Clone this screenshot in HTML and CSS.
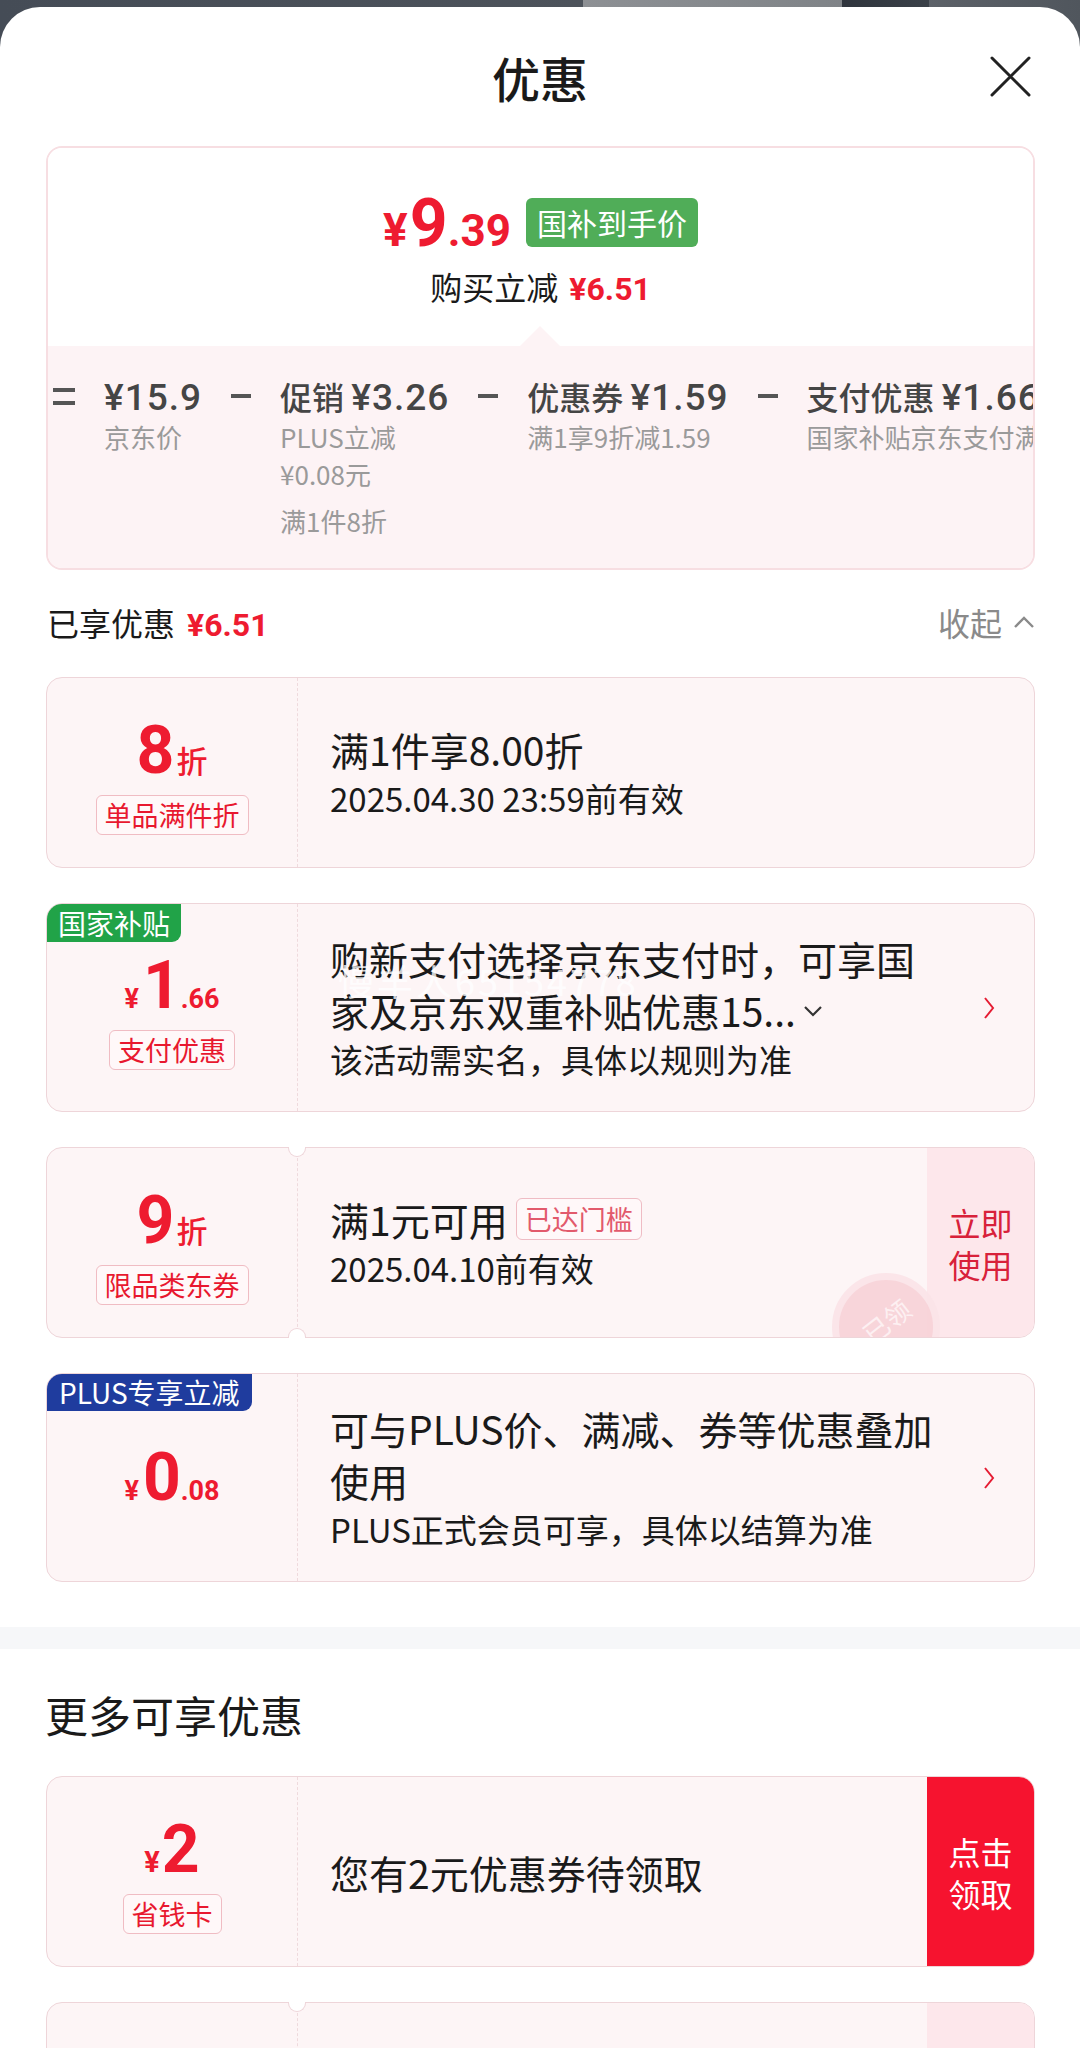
FILE: index.html
```html
<!DOCTYPE html>
<html lang="zh-CN">
<head>
<meta charset="utf-8">
<title>优惠</title>
<link rel="stylesheet" href="styles.css">
</head>
<body>
<div class="sheet">
  <header class="hd">
    <h1 class="hd-title">优惠</h1>
    <span class="hd-close">
      <svg width="43" height="43" viewBox="0 0 43 43"><path d="M3 3L40 40M40 3L3 40" stroke="#222" stroke-width="3" fill="none" stroke-linecap="round"/></svg>
    </span>
  </header>

  <section class="sum">
    <div class="sum-top">
      <div class="sum-price">
        <span class="pp"><span class="pp-y">¥</span><span class="pp-i">9</span><span class="pp-d">.39</span></span>
        <span class="gtag">国补到手价</span>
      </div>
      <div class="sum-save">购买立减 <span class="red-b">¥6.51</span></div>
    </div>
    <div class="sum-bot">
      <div class="calc">
        <span class="op"><span class="op-eq"></span></span>
        <div class="ci">
          <div class="ci-main"><span class="num">¥15.9</span></div>
          <div class="ci-sub">京东价</div>
        </div>
        <span class="op"><span class="op-min"></span></span>
        <div class="ci">
          <div class="ci-main">促销 <span class="num">¥3.26</span></div>
          <div class="ci-sub">PLUS立减</div>
          <div class="ci-sub">¥0.08元</div>
          <div class="ci-sub gap">满1件8折</div>
        </div>
        <span class="op"><span class="op-min"></span></span>
        <div class="ci">
          <div class="ci-main">优惠券 <span class="num">¥1.59</span></div>
          <div class="ci-sub">满1享9折减1.59</div>
        </div>
        <span class="op"><span class="op-min"></span></span>
        <div class="ci">
          <div class="ci-main">支付优惠 <span class="num">¥1.66</span></div>
          <div class="ci-sub">国家补贴京东支付满减</div>
        </div>
      </div>
    </div>
  </section>

  <div class="got">
    <div class="got-l">已享优惠<span class="got-v">¥6.51</span></div>
    <div class="got-r">收起
      <svg width="24" height="14" viewBox="0 0 24 14"><path d="M3 12L12 3L21 12" stroke="#8a8a8a" stroke-width="2.4" fill="none"/></svg>
    </div>
  </div>

  <div class="cp cp-first">
    <div class="cp-l">
      <div class="cp-num"><span class="n-big">8</span><span class="n-unit">折</span></div>
      <span class="cp-tag">单品满件折</span>
    </div>
    <div class="cp-m">
      <div class="cp-t">满1件享8.00折</div>
      <div class="cp-s">2025.04.30 23:59前有效</div>
    </div>
  </div>

  <div class="cp">
    <span class="badge badge-green">国家补贴</span>
    <div class="cp-l">
      <div class="cp-num"><span class="n-yen">¥</span><span class="n-big">1</span><span class="n-dec">.66</span></div>
      <span class="cp-tag">支付优惠</span>
    </div>
    <div class="cp-m">
      <div class="cp-t">购新支付选择京东支付时，可享国</div>
      <div class="cp-t">家及京东双重补贴优惠15...<svg class="chev-d" width="22" height="14" viewBox="0 0 22 14"><path d="M3 3L11 11L19 3" stroke="#333" stroke-width="2.2" fill="none"/></svg></div>
      <div class="cp-s">该活动需实名，具体以规则为准</div>
      <span class="wm">慢羊人65154778</span>
    </div>
    <div class="cp-arr"><svg width="12" height="24" viewBox="0 0 12 24"><path d="M2 2L10 12L2 22" stroke="#e51d34" stroke-width="2" fill="none"/></svg></div>
  </div>

  <div class="cp ticket">
    <div class="cp-l">
      <div class="cp-num"><span class="n-big">9</span><span class="n-unit">折</span></div>
      <span class="cp-tag">限品类东券</span>
    </div>
    <div class="cp-m">
      <div class="cp-t">满1元可用<span class="mtag">已达门槛</span></div>
      <div class="cp-s">2025.04.10前有效</div>
    </div>
    <div class="cp-act soft">立即<br>使用</div>
    <div class="stamp-clip"><div class="stamp"><span>已领</span></div></div>
  </div>

  <div class="cp">
    <span class="badge badge-blue">PLUS专享立减</span>
    <div class="cp-l">
      <div class="cp-num"><span class="n-yen">¥</span><span class="n-big">0</span><span class="n-dec">.08</span></div>
    </div>
    <div class="cp-m">
      <div class="cp-t">可与PLUS价、满减、券等优惠叠加</div>
      <div class="cp-t">使用</div>
      <div class="cp-s">PLUS正式会员可享，具体以结算为准</div>
    </div>
    <div class="cp-arr"><svg width="12" height="24" viewBox="0 0 12 24"><path d="M2 2L10 12L2 22" stroke="#e51d34" stroke-width="2" fill="none"/></svg></div>
  </div>

  <div class="band"></div>

  <h2 class="more">更多可享优惠</h2>

  <div class="cp cp-first2">
    <div class="cp-l">
      <div class="cp-num"><span class="n-yen2">¥</span><span class="n-big">2</span></div>
      <span class="cp-tag">省钱卡</span>
    </div>
    <div class="cp-m">
      <div class="cp-t">您有2元优惠券待领取</div>
    </div>
    <div class="cp-act solid">点击<br>领取</div>
  </div>

  <div class="cp ticket">
    <div class="cp-l"></div>
    <div class="cp-m"></div>
    <div class="cp-act soft"></div>
  </div>
</div>
</body>
</html>
```

FILE: styles.css
```css
html, body {
  margin: 0;
  padding: 0;
}

body {
  width: 1080px;
  background:
    linear-gradient(90deg, #454c56 0%, #4d535b 54%, #8d9094 54%, #7f8387 78%, #2f353d 78%, #3a4048 86%, #5c6168 86%, #50565d 100%) top left / 100% 60px no-repeat,
    #ffffff;
  font-family: "Noto Sans CJK SC", "Noto Sans", sans-serif;
  color: #1a1a1a;
}

.sheet {
  margin-top: 7px;
  background: #ffffff;
  border-radius: 40px 40px 0 0;
  min-height: 2041px;
  overflow: hidden;
}

/* header */
.hd {
  position: relative;
  height: 139px;
  display: flex;
  align-items: center;
  justify-content: center;
}

.hd-title {
  margin: 0;
  font-size: 48px;
  font-weight: 500;
  line-height: 1;
  color: #1a1a1a;
}

.hd-close {
  position: absolute;
  right: 48px;
  top: 48px;
  width: 43px;
  height: 43px;
  display: block;
}

.hd-close svg {
  display: block;
}

/* summary card */
.sum {
  margin: 0 45px 0 46px;
  border: 2px solid #f7dee2;
  border-radius: 16px;
  overflow: hidden;
}

.sum-top {
  height: 198px;
  box-sizing: border-box;
  padding-top: 48px;
  display: flex;
  flex-direction: column;
  align-items: center;
  background: #ffffff;
}

.sum-price {
  height: 56px;
  display: flex;
  align-items: center;
  gap: 15px;
}

.pp {
  font-family: Roboto, "Liberation Sans", sans-serif;
  font-weight: 700;
  color: #ee1b30;
  font-size: 64px;
  line-height: 64px;
  white-space: nowrap;
}

.pp-y {
  font-size: 46px;
  line-height: 1;
  margin-right: 2px;
}

.pp-i {
  font-size: 66px;
  line-height: 1;
}

.pp-d {
  font-size: 44px;
  line-height: 1;
}

.gtag {
  height: 49px;
  line-height: 49px;
  padding: 0 11px;
  border-radius: 6px;
  background: #50ad58;
  color: #ffffff;
  font-size: 30px;
  margin-top: -4px;
}

.sum-save {
  margin-top: 12px;
  font-size: 32px;
  line-height: 44px;
  color: #1a1a1a;
}

.red-b {
  font-family: Roboto, "Liberation Sans", sans-serif;
  font-weight: 700;
  color: #ee1b30;
  font-size: 32px;
  margin-left: 4px;
}

.sum-bot {
  position: relative;
  background: #fdf3f5;
  padding: 30px 0 29px 5px;
}

.sum-bot::before {
  content: "";
  position: absolute;
  left: 472px;
  top: -20px;
  width: 40px;
  height: 20px;
  background: #fdf3f5;
  clip-path: polygon(50% 0, 100% 100%, 0 100%);
}

.calc {
  display: flex;
  align-items: flex-start;
  gap: 29px;
  white-space: nowrap;
}

.op {
  flex: none;
  height: 40px;
  display: flex;
  align-items: center;
}

.op-eq {
  display: block;
  width: 22px;
  height: 17px;
  box-sizing: border-box;
  border-top: 4px solid #555;
  border-bottom: 4px solid #555;
}

.op-min {
  display: block;
  width: 20px;
  height: 4px;
  background: #555;
}

.ci {
  flex: none;
}

.ci-main {
  font-size: 32px;
  line-height: 40px;
  color: #454545;
  font-weight: 500;
}

.num {
  font-family: Roboto, "Liberation Sans", sans-serif;
  font-size: 37px;
  line-height: 40px;
  font-weight: 500;
  letter-spacing: 1px;
}

.ci-sub {
  font-size: 26px;
  line-height: 37px;
  color: #9a9a9a;
}

.ci-sub.gap {
  margin-top: 10px;
}

/* enjoyed row */
.got {
  margin: 30px 44px 0 47px;
  height: 44px;
  display: flex;
  align-items: center;
  justify-content: space-between;
}

.got-l {
  font-size: 32px;
  color: #1a1a1a;
}

.got-v {
  font-family: Roboto, "Liberation Sans", sans-serif;
  font-weight: 700;
  color: #ee1b30;
  margin-left: 12px;
}

.got-r {
  font-size: 32px;
  color: #8a8a8a;
  display: flex;
  align-items: center;
  gap: 10px;
}

/* coupon cards */
.cp {
  position: relative;
  margin: 35px 45px 0 46px;
  min-height: 191px;
  box-sizing: border-box;
  display: flex;
  background: #fdf5f6;
  border: 1px solid #eed5d9;
  border-radius: 16px;
  overflow: hidden;
}

.cp-first {
  margin-top: 33px;
}

.cp-first2 {
  margin-top: 0;
}

.cp.ticket {
  overflow: visible;
}

.cp.ticket::before,
.cp.ticket::after {
  content: "";
  position: absolute;
  left: 241px;
  width: 18px;
  height: 10px;
  box-sizing: border-box;
  background: #ffffff;
  border: 1px solid #eed5d9;
  z-index: 2;
}

.cp.ticket::before {
  top: -1px;
  border-top: none;
  border-radius: 0 0 9px 9px;
}

.cp.ticket::after {
  bottom: -1px;
  border-bottom: none;
  border-radius: 9px 9px 0 0;
}

.cp-l {
  flex: none;
  width: 250px;
  border-right: 1px dashed #efdadd;
  display: flex;
  flex-direction: column;
  align-items: center;
  justify-content: center;
}

.cp-num {
  height: 80px;
  line-height: 80px;
  font-size: 66px;
  font-family: Roboto, "Liberation Sans", sans-serif;
  font-weight: 700;
  color: #ee1b30;
  white-space: nowrap;
}

.n-big {
  font-size: 66px;
  line-height: 1;
}

.n-unit {
  font-family: "Noto Sans CJK SC", sans-serif;
  font-size: 31px;
  font-weight: 500;
  line-height: 1;
  margin-left: 2px;
}

.n-yen {
  font-size: 27px;
  line-height: 1;
  margin-right: 4px;
}

.n-yen2 {
  font-size: 29px;
  line-height: 1;
  margin-right: 2px;
}

.n-dec {
  font-size: 27px;
  line-height: 1;
}

.cp-tag {
  margin-top: 4px;
  height: 40px;
  box-sizing: border-box;
  border: 1.5px solid #f0bcc3;
  border-radius: 6px;
  padding: 0 8px;
  font-size: 27px;
  line-height: 37px;
  color: #e8182f;
  background: #fff8f9;
  white-space: nowrap;
}

.cp-m {
  position: relative;
  flex: 1;
  min-width: 0;
  padding: 28px 0 28px 32px;
  display: flex;
  flex-direction: column;
  justify-content: center;
}

.cp-t {
  font-size: 39px;
  line-height: 52px;
  color: #1a1a1a;
  white-space: nowrap;
  display: flex;
  align-items: center;
}

.cp-s {
  font-size: 33px;
  line-height: 47px;
  color: #1a1a1a;
  white-space: nowrap;
}

.chev-d {
  margin-left: 6px;
  margin-top: 2px;
}

.mtag {
  margin-left: 8px;
  height: 42px;
  box-sizing: border-box;
  border: 1.5px solid #efbcc4;
  border-radius: 6px;
  padding: 0 8px;
  font-size: 27px;
  line-height: 39px;
  color: #e25a6c;
  background: #fff8f9;
}

.wm {
  position: absolute;
  left: 40px;
  top: 56px;
  font-size: 36px;
  line-height: 40px;
  letter-spacing: 3px;
  color: rgba(255, 255, 255, 0.8);
  white-space: nowrap;
  pointer-events: none;
}

.cp-arr {
  flex: none;
  width: 90px;
  display: flex;
  align-items: center;
  justify-content: center;
}

.cp-act {
  flex: none;
  width: 107px;
  display: flex;
  align-items: center;
  justify-content: center;
  text-align: center;
  font-size: 32px;
  line-height: 42px;
}

.cp-act.soft {
  background: #fde7eb;
  color: #d8213a;
}

.cp-act.solid {
  background: #f6132f;
  color: #ffffff;
}

.ticket .cp-act {
  border-radius: 0 15px 15px 0;
}

.badge {
  position: absolute;
  left: 0;
  top: 0;
  z-index: 3;
  height: 38px;
  line-height: 38px;
  padding: 0 12px;
  font-size: 28px;
  color: #ffffff;
  border-radius: 0 0 9px 0;
  white-space: nowrap;
}

.badge-green {
  background: #21a348;
  padding: 0 11px;
}

.badge-blue {
  background: #1f3c9e;
  height: 37px;
  line-height: 37px;
}

.stamp-clip {
  position: absolute;
  inset: 0;
  overflow: hidden;
  border-radius: 15px;
  pointer-events: none;
}

.stamp {
  position: absolute;
  left: 785px;
  top: 125px;
  width: 108px;
  height: 108px;
  box-sizing: border-box;
  border-radius: 50%;
  background: #f8d2d8;
  border: 7px solid #fbe4e8;
  display: flex;
  align-items: flex-start;
  justify-content: center;
  opacity: 0.9;
}

.stamp span {
  margin-top: 22px;
  font-size: 26px;
  color: #fdf0f2;
  transform: rotate(-38deg);
}

/* lower section */
.band {
  margin-top: 45px;
  height: 22px;
  background: #f6f7f9;
}

.more {
  margin: 37px 0 34px 45px;
  font-size: 43px;
  line-height: 56px;
  font-weight: 400;
  color: #1a1a1a;
}
```
